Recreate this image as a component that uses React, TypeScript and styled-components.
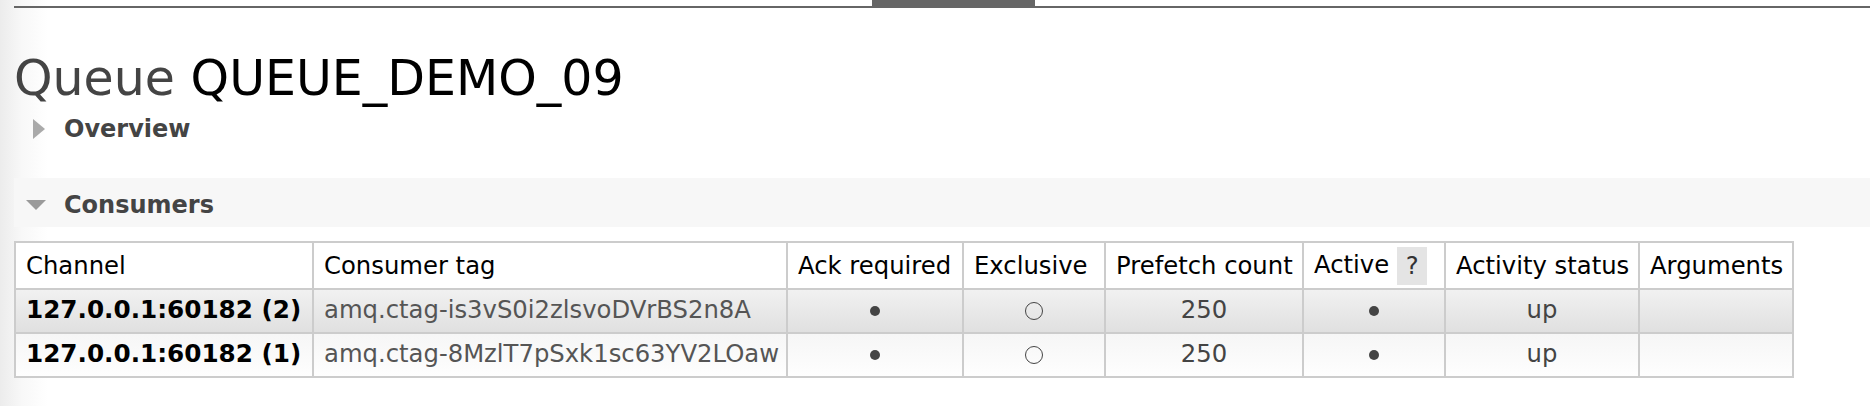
import React from "react";
import styled, { createGlobalStyle } from "styled-components";

const GlobalStyle = createGlobalStyle`
  html, body { margin: 0; padding: 0; }
  body {
    background: #fff linear-gradient(to right, #ececec 0px, #f8f8f8 22px, #fff 48px);
    font-family: "DejaVu Sans", Verdana, sans-serif;
    min-height: 406px;
  }
`;

const TopNav = styled.div`
  display: flex;
  margin-left: 14px;
  height: 8px;
  box-sizing: border-box;
  border-bottom: 2px solid #666;
`;

const NavTab = styled.div`
  margin-left: 858px;
  width: 163px;
  height: 6px;
  background: #666;
`;

const Main = styled.div`
  padding-left: 14px;
`;

const Title = styled.h1`
  margin: 42px 0 0;
  font-size: 49px;
  line-height: 57px;
  font-weight: normal;
  color: #444;
  white-space: nowrap;
`;

const TitleName = styled.span`
  color: #000;
`;

const SectionHeader = styled.div<{ $open?: boolean }>`
  display: flex;
  align-items: center;
  box-sizing: border-box;
  margin-top: ${(p) => (p.$open ? "35px" : "8px")};
  height: ${(p) => (p.$open ? "49px" : "28px")};
  padding: ${(p) => (p.$open ? "5px 0 0 12px" : "0 0 0 19px")};
  gap: ${(p) => (p.$open ? "18px" : "19px")};
  background: ${(p) => (p.$open ? "#f7f7f7" : "transparent")};
`;

const Arrow = styled.span<{ $open?: boolean }>`
  display: block;
  width: 0;
  height: 0;
  ${(p) =>
    p.$open
      ? `border-left: 10px solid transparent;
         border-right: 10px solid transparent;
         border-top: 10px solid #9a9a9a;`
      : `border-top: 10px solid transparent;
         border-bottom: 10px solid transparent;
         border-left: 12px solid #aaa;`}
`;

const SectionTitle = styled.span`
  font-size: 24px;
  line-height: 28px;
  font-weight: bold;
  color: #444;
`;

const Table = styled.table`
  margin-top: 14px;
  border-collapse: separate;
  border-spacing: 0;
  table-layout: fixed;
  width: 1778px;
  border-left: 2px solid #ccc;
  border-top: 2px solid #ccc;
  font-size: 24.3px;
`;

const Col = styled.col<{ $w: number }>`
  width: ${(p) => p.$w}px;
`;

const HeadCell = styled.th`
  box-sizing: border-box;
  height: 47px;
  padding: 0 10px;
  text-align: left;
  font-weight: normal;
  color: #000;
  white-space: nowrap;
  vertical-align: middle;
  border-right: 2px solid #ccc;
  border-bottom: 2px solid #ccc;
  background: #fff;
`;

const HelpBox = styled.span`
  display: inline-block;
  width: 30px;
  height: 38px;
  line-height: 38px;
  margin-left: 8px;
  text-align: center;
  background: #e4e4e4;
  color: #333;
  vertical-align: middle;
`;

const Row = styled.tr<{ $alt: 1 | 2 }>`
  & > td {
    background: ${(p) =>
      p.$alt === 1
        ? "linear-gradient(#f1f1f1, #e0e0e0)"
        : "linear-gradient(#f6f6f6, #fefefe)"};
  }
`;

const Cell = styled.td<{ $kind?: "channel" | "tag" | "center" }>`
  box-sizing: border-box;
  height: 44px;
  padding: 0 10px 3px;
  white-space: nowrap;
  overflow: hidden;
  vertical-align: middle;
  border-right: 2px solid #ccc;
  border-bottom: 2px solid #ccc;
  text-align: ${(p) => (p.$kind === "center" ? "center" : "left")};
  font-weight: ${(p) => (p.$kind === "channel" ? "bold" : "normal")};
  font-size: ${(p) => (p.$kind === "channel" ? "24.7px" : "24.3px")};
  color: ${(p) => (p.$kind === "channel" ? "#000" : p.$kind === "tag" ? "#555" : "#444")};
`;

const Dot = styled.span<{ $filled?: boolean }>`
  display: inline-block;
  box-sizing: border-box;
  border-radius: 50%;
  vertical-align: middle;
  ${(p) =>
    p.$filled
      ? `width: 10px; height: 10px; background: #444;`
      : `width: 18px; height: 18px; border: 1.5px solid #444; background: transparent;`}
`;

const consumers = [
  { channel: "127.0.0.1:60182 (2)", tag: "amq.ctag-is3vS0i2zlsvoDVrBS2n8A" },
  { channel: "127.0.0.1:60182 (1)", tag: "amq.ctag-8MzlT7pSxk1sc63YV2LOaw" },
];

const widths = [298, 474, 176, 142, 198, 142, 194, 154];

export default function App() {
  return (
    <>
      <GlobalStyle />
      <TopNav>
        <NavTab />
      </TopNav>
      <Main>
        <Title>
          Queue <TitleName>QUEUE_DEMO_09</TitleName>
        </Title>
        <SectionHeader>
          <Arrow />
          <SectionTitle>Overview</SectionTitle>
        </SectionHeader>
        <SectionHeader $open>
          <Arrow $open />
          <SectionTitle>Consumers</SectionTitle>
        </SectionHeader>
        <Table>
          <colgroup>
            {widths.map((w, i) => (
              <Col key={i} $w={w} />
            ))}
          </colgroup>
          <thead>
            <tr>
              <HeadCell>Channel</HeadCell>
              <HeadCell>Consumer tag</HeadCell>
              <HeadCell>Ack required</HeadCell>
              <HeadCell>Exclusive</HeadCell>
              <HeadCell>Prefetch count</HeadCell>
              <HeadCell>
                Active<HelpBox>?</HelpBox>
              </HeadCell>
              <HeadCell>Activity status</HeadCell>
              <HeadCell>Arguments</HeadCell>
            </tr>
          </thead>
          <tbody>
            {consumers.map((c, i) => (
              <Row key={c.tag} $alt={i === 0 ? 1 : 2}>
                <Cell $kind="channel">{c.channel}</Cell>
                <Cell $kind="tag">{c.tag}</Cell>
                <Cell $kind="center">
                  <Dot $filled />
                </Cell>
                <Cell $kind="center">
                  <Dot />
                </Cell>
                <Cell $kind="center">250</Cell>
                <Cell $kind="center">
                  <Dot $filled />
                </Cell>
                <Cell $kind="center">up</Cell>
                <Cell $kind="center"></Cell>
              </Row>
            ))}
          </tbody>
        </Table>
      </Main>
    </>
  );
}
